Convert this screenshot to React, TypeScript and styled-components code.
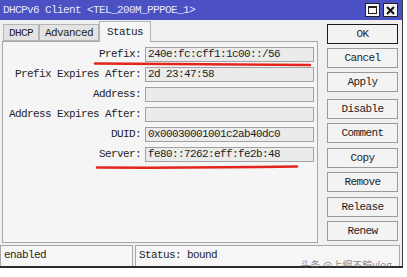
import React from 'react';
import styled, { createGlobalStyle } from 'styled-components';

const GlobalStyle = createGlobalStyle`
  html, body {
    margin: 0;
    padding: 0;
    background: #ffffff;
  }
  body {
    font-family: 'Liberation Mono', 'DejaVu Sans Mono', monospace;
    font-size: 11px;
    letter-spacing: -0.6px;
    color: #1e1e1e;
  }
`;

const Window = styled.div`
  position: relative;
  width: 403px;
  height: 268px;
  background: #f0f0f0;
  border-right: 1px solid #3a3a3a;
  border-bottom: 2px solid #2c2c2c;
  box-sizing: border-box;
  display: flex;
  flex-direction: column;
`;

const TitleBar = styled.div`
  height: 20px;
  background: #4b51c3;
  color: #e6e6ff;
  display: flex;
  align-items: center;
  padding: 0 4px 0 3px;
  box-sizing: border-box;
`;

const TitleText = styled.span`
  flex: 1;
  white-space: pre;
`;

const WinButton = styled.div`
  width: 13px;
  height: 12px;
  margin-left: 3px;
  background: #f4f4f4;
  border: 1px solid #222;
  display: flex;
  align-items: center;
  justify-content: center;
`;

const Main = styled.div`
  display: flex;
  height: 225px;
`;

const LeftColumn = styled.div`
  width: 316px;
  margin-left: 2px;
  display: flex;
  flex-direction: column;
`;

const TabRow = styled.div`
  height: 21px;
  display: flex;
  align-items: flex-end;
  padding-left: 1px;
`;

const Tab = styled.div<{ $active?: boolean }>`
  height: ${p => (p.$active ? 21 : 17)}px;
  padding: 0 ${p => (p.$active ? 7 : 5)}px;
  background: ${p => (p.$active ? '#f5f5f5' : '#e3e3e3')};
  border: 1px solid #b4b4b4;
  border-bottom: ${p => (p.$active ? 'none' : '1px solid #b4b4b4')};
  box-sizing: border-box;
  display: flex;
  align-items: center;
  margin-bottom: ${p => (p.$active ? -1 : 0)}px;
  position: relative;
  z-index: ${p => (p.$active ? 1 : 0)};
`;

const Panel = styled.div`
  height: 202px;
  border: 1px solid #a8a8a8;
  background: #f5f5f5;
  box-sizing: border-box;
  padding: 5px 6px 0 3px;
  display: flex;
  flex-direction: column;
  gap: 5px;
`;

const FieldRow = styled.div`
  display: grid;
  grid-template-columns: 135px 169px;
  column-gap: 4px;
  height: 15px;
`;

const Label = styled.div`
  text-align: right;
  line-height: 15px;
  white-space: pre;
`;

const Input = styled.div`
  background: #ebebeb;
  border: 1px solid #a2a2a2;
  box-sizing: border-box;
  line-height: 13px;
  padding-left: 2px;
  white-space: pre;
  overflow: hidden;
`;

const ButtonColumn = styled.div`
  width: 71px;
  margin-left: 9px;
  padding-top: 4px;
  display: flex;
  flex-direction: column;
`;

const Button = styled.div<{ $gap: number; $default?: boolean }>`
  height: 20px;
  margin-top: ${p => p.$gap}px;
  border: 1px solid ${p => (p.$default ? '#1a1a1a' : '#9a9a9a')};
  background: #f3f3f3;
  box-sizing: border-box;
  display: flex;
  align-items: center;
  justify-content: center;
`;

const StatusBar = styled.div`
  display: flex;
  height: 21px;
  gap: 2px;
`;

const StatusCell = styled.div<{ $width: number }>`
  width: ${p => p.$width}px;
  height: 21px;
  border: 1px solid #a8a8a8;
  border-bottom: none;
  background: #f6f6f6;
  box-sizing: border-box;
  padding-left: 3px;
  line-height: 19px;
  white-space: pre;
`;

const Annotation = styled.svg`
  position: absolute;
  left: 0;
  top: 0;
  pointer-events: none;
`;

const Watermark = styled.div`
  position: absolute;
  right: 10px;
  bottom: -6px;
  font-family: 'Noto Sans CJK SC', 'Noto Sans', sans-serif;
  letter-spacing: 0;
  font-size: 10px;
  color: rgba(90, 90, 90, 0.7);
`;

const fields = [
  { label: 'Prefix:', value: '240e:fc:cff1:1c00::/56' },
  { label: 'Prefix Expires After:', value: '2d 23:47:58' },
  { label: 'Address:', value: '' },
  { label: 'Address Expires After:', value: '' },
  { label: 'DUID:', value: '0x00030001001c2ab40dc0' },
  { label: 'Server:', value: 'fe80::7262:eff:fe2b:48' },
];

const buttons = [
  { text: 'OK', gap: 0, def: true },
  { text: 'Cancel', gap: 4 },
  { text: 'Apply', gap: 4 },
  { text: 'Disable', gap: 7 },
  { text: 'Comment', gap: 4 },
  { text: 'Copy', gap: 5 },
  { text: 'Remove', gap: 4 },
  { text: 'Release', gap: 5 },
  { text: 'Renew', gap: 4 },
];

export default function App() {
  return (
    <>
      <GlobalStyle />
      <Window>
        <TitleBar>
          <TitleText>DHCPv6 Client &lt;TEL_200M_PPPOE_1&gt;</TitleText>
          <WinButton>
            <svg width="9" height="8" viewBox="0 0 9 8">
              <rect x="0.5" y="0.5" width="8" height="7" fill="none" stroke="#222" />
              <line x1="0" y1="1.5" x2="9" y2="1.5" stroke="#222" />
            </svg>
          </WinButton>
          <WinButton>
            <svg width="9" height="9" viewBox="0 0 9 9">
              <path d="M1 1 L8 8 M8 1 L1 8" stroke="#111" strokeWidth="2" />
            </svg>
          </WinButton>
        </TitleBar>
        <Main>
          <LeftColumn>
            <TabRow>
              <Tab>DHCP</Tab>
              <Tab>Advanced</Tab>
              <Tab $active>Status</Tab>
            </TabRow>
            <Panel>
              {fields.map(f => (
                <FieldRow key={f.label}>
                  <Label>{f.label}</Label>
                  <Input>{f.value}</Input>
                </FieldRow>
              ))}
            </Panel>
          </LeftColumn>
          <ButtonColumn>
            {buttons.map(b => (
              <Button key={b.text} $gap={b.gap} $default={b.def}>
                {b.text}
              </Button>
            ))}
          </ButtonColumn>
        </Main>
        <StatusBar>
          <StatusCell $width={133}>enabled</StatusCell>
          <StatusCell $width={265}>Status: bound</StatusCell>
        </StatusBar>
        <Annotation width="403" height="268">
          <path d="M95 63.5 Q200 64.5 310 65" stroke="#e3241c" strokeWidth="2.5" fill="none" strokeLinecap="round" />
          <path d="M97 167.5 Q200 168 297 166.5" stroke="#e3241c" strokeWidth="2.5" fill="none" strokeLinecap="round" />
        </Annotation>
        <Watermark>头条 @上網不鏡vlog</Watermark>
      </Window>
    </>
  );
}
